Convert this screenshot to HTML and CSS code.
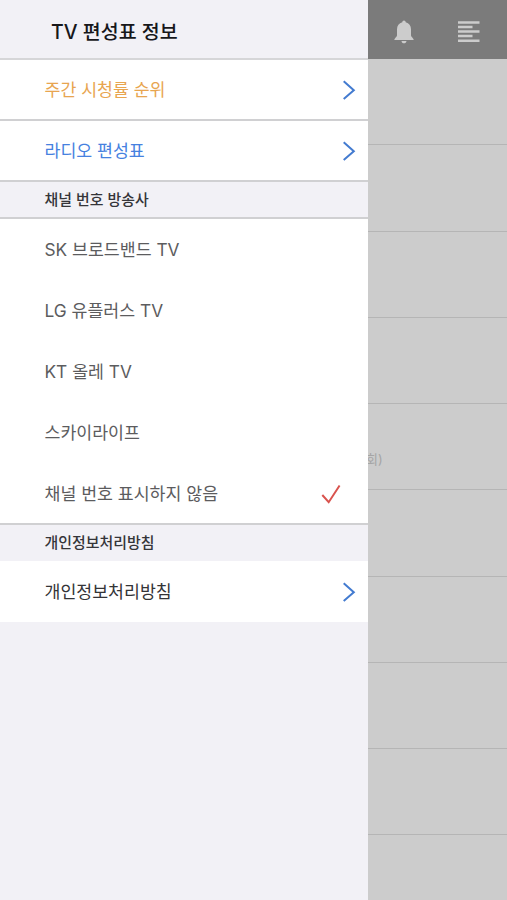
FILE: index.html
```html
<!DOCTYPE html>
<html lang="ko">
<head>
<meta charset="utf-8">
<title>TV 편성표 정보</title>
<link rel="stylesheet" href="styles.css">
</head>
<body>
<div class="app">
  <aside class="drawer">
    <header class="title">TV 편성표 정보</header>
    <nav>
      <a class="row line orange"><span>주간 시청률 순위</span><svg class="chevron" viewBox="0 0 14 20"><path d="M1.7 1.3 11.8 10.2 1.7 19"/></svg></a>
      <a class="row line blue"><span>라디오 편성표</span><svg class="chevron" viewBox="0 0 14 20"><path d="M1.7 1.3 11.8 10.2 1.7 19"/></svg></a>
      <h2 class="section line">채널 번호 방송사</h2>
      <div class="row">SK 브로드밴드 TV</div>
      <div class="row">LG 유플러스 TV</div>
      <div class="row">KT 올레 TV</div>
      <div class="row">스카이라이프</div>
      <div class="row line last"><span>채널 번호 표시하지 않음</span><svg class="check" viewBox="0 0 20 20"><path d="M1.3 11 7.7 18.2 18.6 1.5"/></svg></div>
      <h2 class="section plain">개인정보처리방침</h2>
      <a class="row dark"><span>개인정보처리방침</span><svg class="chevron" viewBox="0 0 14 20"><path d="M1.7 1.3 11.8 10.2 1.7 19"/></svg></a>
    </nav>
  </aside>
  <main class="page">
    <div class="toolbar">
      <svg class="bell" viewBox="0 0 20 24"><path d="M10 .5c1 0 1.600.7 1.700 1.800 3.300.9 5.300 3.500 5.300 7v6.200c0 1.500 2.500 2.500 2.800 4.500H.2c.3-2 2.800-3 2.800-4.500V9.300c0-3.500 2-6.100 5.300-7C8.400 1.200 9 .5 10 .5ZM7.500 21h5c-.2 1.500-1.200 2.300-2.500 2.300S7.700 22.500 7.500 21Z"/></svg>
      <svg class="list" viewBox="0 0 22 22"><path d="M0 1.500h21.500M0 6h14.500M0 10.500h21.500M0 15h14.500M0 19.800h21.500"/></svg>
    </div>
    <div class="slots">
      <div class="slot"></div><div class="slot"></div><div class="slot"></div><div class="slot"></div>
      <div class="slot"><span>회)</span></div>
      <div class="slot"></div><div class="slot"></div><div class="slot"></div><div class="slot"></div>
    </div>
  </main>
</div>
</body>
</html>
```
FILE: styles.css
```css
* { box-sizing: border-box; }
body { margin: 0; font-family: Inter, "Noto Sans CJK KR", sans-serif; }
.app { display: flex; width: 507px; height: 900px; overflow: hidden; background: #ccc; }
.drawer { width: 368px; flex: none; background: #f2f1f6; }
.title {
  height: 60px; padding: 2px 0 0 51px; border-bottom: 2px solid #d6d6d8;
  display: flex; align-items: center; font-size: 19.5px; font-weight: 500; color: #17171a;
}
.row {
  height: 61px; padding: 0 12px 3px 44.5px; background: #fff;
  display: flex; align-items: center; justify-content: space-between;
  font-size: 17.3px; color: #5c5c5e; white-space: nowrap;
}
.line { border-bottom: 2px solid #d0d0d2; }
.orange { color: #e8a550; }
.blue { color: #4681df; }
.dark { color: #343437; }
.section {
  height: 37px; margin: 0; padding: 0 0 2px 44.5px; background: #f2f1f6;
  display: flex; align-items: center; font-size: 14.95px; font-weight: 500; color: #353539;
}
.plain { height: 36px; padding-bottom: 3px; }
.last { height: 62px; padding-top: 1px; }
.chevron { width: 14px; height: 20px; margin-top: 3px; fill: none; stroke: #437bd0; stroke-width: 2; }
.check { width: 20px; height: 20px; margin: 3px 15px 0 0; fill: none; stroke: #d9534e; stroke-width: 2; }
.page { flex: 1; overflow: hidden; }
.toolbar {
  height: 59px; padding: 4px 27px 0 26px; background: #7b7b7b;
  display: flex; align-items: center; justify-content: space-between;
}
.bell { width: 20px; height: 24px; fill: #ccc; }
.list { width: 22px; height: 22px; fill: none; stroke: #ccc; stroke-width: 2.4; }
.slot { display: flow-root; height: 86.25px; border-bottom: 1.5px solid #b5b5b5; }
.slot span { display: block; margin: 45px 0 0 -2px; font-size: 13px; line-height: 20px; color: #a5a5a5; }
```
